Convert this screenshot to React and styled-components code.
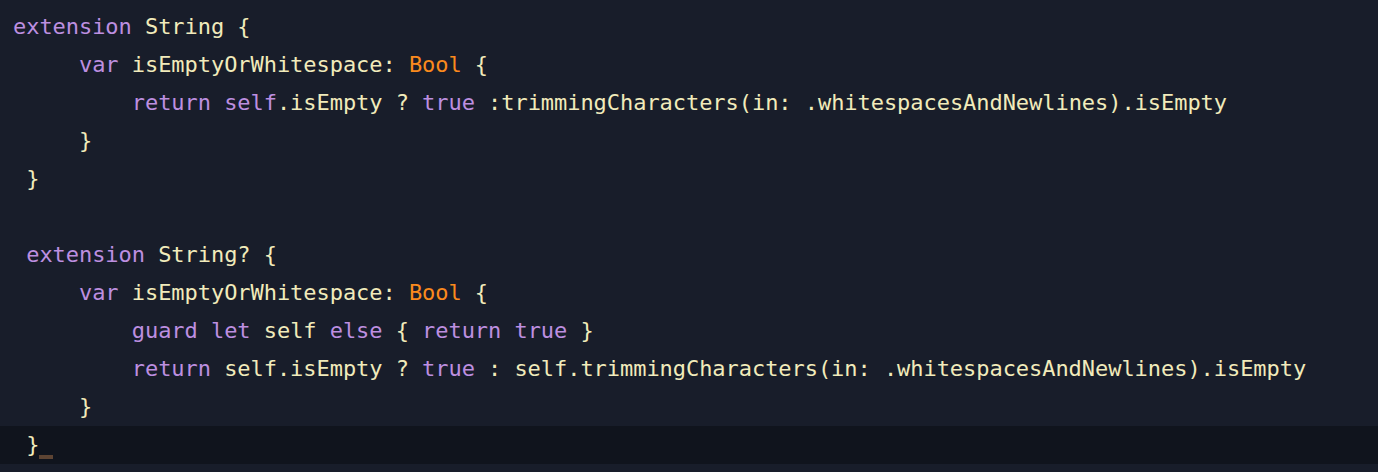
import React from 'react';
import styled, { createGlobalStyle } from 'styled-components';

const GlobalStyle = createGlobalStyle`
  html, body {
    margin: 0;
    padding: 0;
    background: #181d2a;
  }
`;

const Editor = styled.div`
  width: 1378px;
  height: 472px;
  box-sizing: border-box;
  padding-top: 8px;
  background: #181d2a;
  font-family: "DejaVu Sans Mono", "Liberation Mono", monospace;
  font-size: 22px;
  letter-spacing: -0.05px;
  overflow: hidden;
`;

const Line = styled.div`
  height: 38px;
  line-height: 38px;
  padding-left: 13px;
  white-space: pre;
  color: #f1ebbb;
  background: ${({ $current }) => ($current ? '#10141d' : 'transparent')};
`;

const tokenColors = {
  kw: '#bd8fe0',
  type: '#fb8a1d',
  text: '#f1ebbb',
};

const Tok = styled.span`
  color: ${({ $kind }) => tokenColors[$kind] || tokenColors.text};
`;

const Cursor = styled.span`
  display: inline-block;
  width: 14px;
  height: 4px;
  vertical-align: -7px;
  background: #5d4433;
`;

// each line: indent (in columns) + tokens [kind, text]
const lines = [
  [0, [['kw', 'extension'], ['text', ' String {']]],
  [5, [['kw', 'var'], ['text', ' isEmptyOrWhitespace: '], ['type', 'Bool'], ['text', ' {']]],
  [9, [
    ['kw', 'return'], ['text', ' '], ['kw', 'self'], ['text', '.isEmpty ? '], ['kw', 'true'],
    ['text', ' :trimmingCharacters(in: .whitespacesAndNewlines).isEmpty'],
  ]],
  [5, [['text', '}']]],
  [1, [['text', '}']]],
  [0, []],
  [1, [['kw', 'extension'], ['text', ' String? {']]],
  [5, [['kw', 'var'], ['text', ' isEmptyOrWhitespace: '], ['type', 'Bool'], ['text', ' {']]],
  [9, [
    ['kw', 'guard'], ['text', ' '], ['kw', 'let'], ['text', ' self '], ['kw', 'else'],
    ['text', ' { '], ['kw', 'return'], ['text', ' '], ['kw', 'true'], ['text', ' }'],
  ]],
  [9, [
    ['kw', 'return'], ['text', ' self.isEmpty ? '], ['kw', 'true'],
    ['text', ' : self.trimmingCharacters(in: .whitespacesAndNewlines).isEmpty'],
  ]],
  [5, [['text', '}']]],
  [1, [['text', '}']]],
];

const App = () => {
  const last = lines.length - 1;
  return (
    <>
      <GlobalStyle />
      <Editor>
        {lines.map(([indent, tokens], i) => (
          <Line key={i} $current={i === last}>
            {' '.repeat(indent)}
            {tokens.map(([kind, text], j) => (
              <Tok key={j} $kind={kind}>{text}</Tok>
            ))}
            {i === last && <Cursor />}
            {tokens.length === 0 && ' '}
          </Line>
        ))}
      </Editor>
    </>
  );
};

export default App;
